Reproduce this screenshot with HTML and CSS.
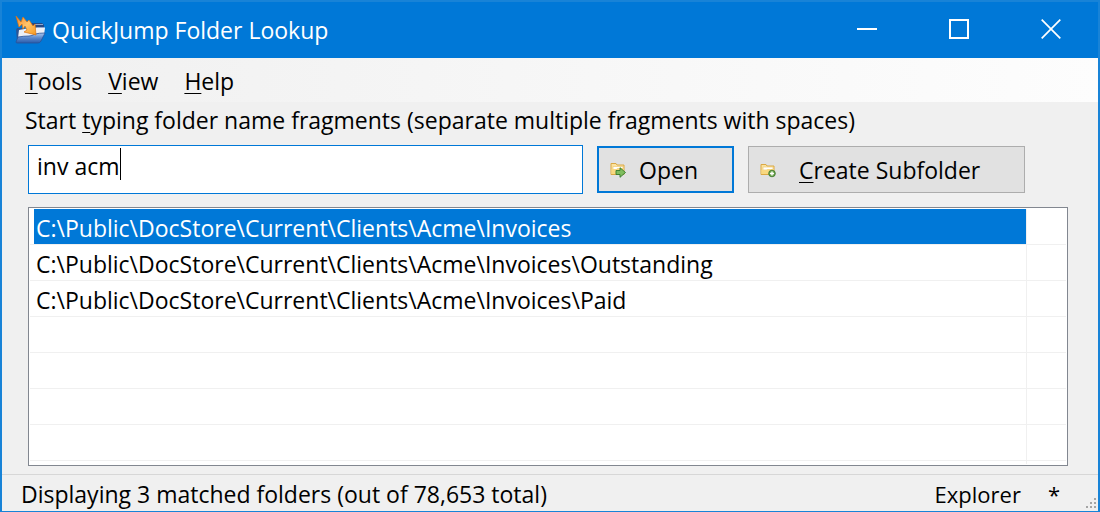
FILE: index.html
```
<!DOCTYPE html>
<html lang="en">
<head>
    <meta charset="UTF-8">
    <meta name="viewport" content="width=device-width, initial-scale=1.0">
    <title>QuickJump Folder Lookup</title>
    <link rel="stylesheet" href="styles.css">
</head>
<body>
    <div class="window">
        <header class="titlebar">
            <svg class="app-icon" width="32" height="30" viewBox="0 0 32 30" aria-hidden="true">
                <defs>
                    <linearGradient id="folderBlue" x1="0" y1="0" x2="0" y2="1">
                        <stop offset="0" stop-color="#a9c8ef"/>
                        <stop offset="0.5" stop-color="#5a87cb"/>
                        <stop offset="1" stop-color="#2a5cab"/>
                    </linearGradient>
                    <linearGradient id="boltOrange" x1="0" y1="0" x2="1" y2="1">
                        <stop offset="0" stop-color="#f58220"/>
                        <stop offset="0.5" stop-color="#ffc56c"/>
                        <stop offset="1" stop-color="#f79a1e"/>
                    </linearGradient>
                </defs>
                <path d="M1 15l1-2h7v9l-7 3z" fill="#2b5595"/>
                <path d="M16 8h11l2 2v3h-13z" fill="#234987"/>
                <path d="M4 15l11-2 14-1 1 1-1 7-4 3H3z" fill="#edf0f6"/>
                <path d="M20 9.500h8M22 12.500h7" stroke="#8ea6cf" fill="none"/>
                <path d="M1 27l2-5q6-1 11-1 3 0 6-2 4-1 10-1l-4 8q-1 2-3 2H2q-1 0-1-1z" fill="url(#folderBlue)" stroke="#2a5298" stroke-width=".8"/>
                <path d="M1 1L6 7L8 2L12 7L14 5L18 11L20 9L21 20L9 17L12 15L10 11L8 14L7 9L4 12Z" fill="url(#boltOrange)" stroke="#e0720f" stroke-width=".7"/>
            </svg>
            <h1 class="title">QuickJump Folder Lookup</h1>
            <div class="window-controls">
                <button type="button" class="control" aria-label="Minimize">
                    <svg width="20" height="20" viewBox="0 0 20 20"><path d="M0 10h20" stroke="#fff" stroke-width="2"/></svg>
                </button>
                <button type="button" class="control" aria-label="Maximize">
                    <svg width="20" height="20" viewBox="0 0 20 20"><path d="M1 1h18v18H1z" stroke="#fff" stroke-width="2" fill="none"/></svg>
                </button>
                <button type="button" class="control" aria-label="Close">
                    <svg width="20" height="20" viewBox="0 0 20 20"><path d="M.7.7l18.6 18.6M19.3.7L.7 19.3" stroke="#fff" stroke-width="1.7"/></svg>
                </button>
            </div>
        </header>

        <nav class="menubar">
            <button type="button" class="menu-item"><u>T</u>ools</button>
            <button type="button" class="menu-item"><u>V</u>iew</button>
            <button type="button" class="menu-item"><u>H</u>elp</button>
        </nav>

        <main class="content">
            <label class="hint" for="fragments">Start <u>t</u>yping folder name fragments (separate multiple fragments with spaces)</label>

            <div class="search-row">
                <div class="search-box">
                    <input type="text" id="fragments" class="search-input" value="inv acm" autocomplete="off" spellcheck="false">
                    <span class="caret"></span>
                </div>
                <button type="submit" class="btn btn-open">
                    <svg width="16" height="16" viewBox="0 0 16 16" aria-hidden="true">
                        <path d="M1 12.500V1.500h5l1 1.500h7v9.500z" fill="#fbe3a0" stroke="#dba843"/>
                        <path d="M3 4.500h10v3H3z" fill="#fff" stroke="#ecc876" stroke-width=".7"/>
                        <path d="M1.500 7h5l1-1h6v6h-12z" fill="#f8d880"/>
                        <path d="M6 8.500h4V5.700l5.500 4.800-5.500 4.800v-2.800H6z" fill="#7fbd5f" stroke="#347b2c" stroke-width=".9"/>
                    </svg>
                    <span>Open</span>
                </button>
                <button type="button" class="btn btn-create">
                    <svg width="16" height="16" viewBox="0 0 16 16" aria-hidden="true">
                        <path d="M1 12.500V2.500h5l1 1.500h7v8.500z" fill="#fbe3a0" stroke="#dba843"/>
                        <path d="M3 5h10v3H3z" fill="#fff" stroke="#ecc876" stroke-width=".7"/>
                        <path d="M1.500 8h5l1-1h6v5h-12z" fill="#f8d880"/>
                        <circle cx="12" cy="11.500" r="3.300" fill="#6fa64f" stroke="#3f7c31" stroke-width=".9"/>
                        <path d="M12 9.500v4M10 11.500h4" stroke="#fff" stroke-width="1.400"/>
                    </svg>
                    <span><u>C</u>reate Subfolder</span>
                </button>
            </div>

            <div class="results">
                <table class="folders" aria-label="Matched folders">
                    <tbody>
                        <tr class="selected"><td><span>C:\Public\DocStore\Current\Clients\Acme\Invoices</span></td><td class="spare"></td></tr>
                        <tr><td><span>C:\Public\DocStore\Current\Clients\Acme\Invoices\Outstanding</span></td><td class="spare"></td></tr>
                        <tr><td><span>C:\Public\DocStore\Current\Clients\Acme\Invoices\Paid</span></td><td class="spare"></td></tr>
                        <tr><td></td><td class="spare"></td></tr>
                        <tr><td></td><td class="spare"></td></tr>
                        <tr><td></td><td class="spare"></td></tr>
                        <tr><td></td><td class="spare"></td></tr>
                        <tr class="last"><td></td><td class="spare"></td></tr>
                    </tbody>
                </table>
            </div>
        </main>

        <footer class="statusbar">
            <span class="status-text">Displaying 3 matched folders (out of 78,653 total)</span>
            <span class="mode">Explorer</span>
            <span class="modified">*</span>
            <svg class="grip" width="12" height="12" viewBox="0 0 12 12" aria-hidden="true">
                <path d="M9 1h2v2H9zM5 5h2v2H5zM9 5h2v2H9zM1 9h2v2H1zM5 9h2v2H5zM9 9h2v2H9z" fill="#a5a5a5"/>
            </svg>
        </footer>
    </div>
</body>
</html>
```

FILE: styles.css
```
* {
    box-sizing: border-box;
}
body {
    margin: 0;
    font-family: "Open Sans", "Noto Sans", sans-serif;
    font-size: 23px;
    line-height: 32px;
    color: #000;
}
button, input {
    font: inherit;
    color: inherit;
}
u {
    text-decoration-thickness: 1px;
    text-underline-offset: 3px;
}
.window {
    display: flex;
    flex-direction: column;
    min-height: 100vh;
    border: 2px solid #1883d7;
    border-bottom-width: 1px;
    background-color: #f0f0f0;
}

/* title bar */
.titlebar {
    display: flex;
    align-items: center;
    height: 56px;
    padding-left: 13px;
    background-color: #0078d7;
    color: #fff;
}
.title {
    flex: 1;
    margin: 0 0 0 5px;
    font-size: 23px;
    font-weight: normal;
}
.window-controls {
    display: flex;
    padding-right: 1px;
}
.control {
    display: flex;
    align-items: center;
    justify-content: center;
    width: 92px;
    height: 56px;
    padding: 0 0 2px;
    border: none;
    background: none;
}

/* menu */
.menubar {
    display: flex;
    gap: 26px;
    height: 44px;
    padding: 0 23px;
    background: linear-gradient(to right, #f0f0f0, #fdfdfd);
}
.menu-item {
    padding: 2px 0 0;
    border: none;
    background: none;
}

.content {
    display: flex;
    flex: 1;
    flex-direction: column;
    padding: 2px 30px 8px 26px;
}
.hint {
    align-self: flex-start;
    margin-left: -3px;
}
.search-row {
    display: flex;
    align-items: flex-start;
    gap: 14px;
    margin: 9px 43px 13px 0;
}
.search-box {
    position: relative;
    flex: 1;
}
.search-input {
    display: block;
    width: 100%;
    height: 49px;
    padding: 0 8px 8px;
    border: 1px solid #0078d7;
    background-color: #fff;
    outline: none;
}
.caret {
    position: absolute;
    top: 3px;
    left: 92px;
    width: 1px;
    height: 32px;
    background-color: #000;
}
.btn {
    display: flex;
    align-items: center;
    height: 47px;
    margin-top: 1px;
    padding: 0 11px;
    border: 1px solid #adadad;
    background-color: #e1e1e1;
}
.btn-open {
    gap: 13px;
    min-width: 137px;
    border: 2px solid #0078d7;
}
.btn-create {
    gap: 23px;
    min-width: 277px;
}

/* results */
.results {
    flex: 1;
    padding: 1px 1px 0;
    border: 1px solid #828790;
    background-color: #fff;
}
.folders {
    width: 100%;
    border-collapse: separate;
    border-spacing: 0;
    table-layout: fixed;
}
.folders td {
    height: 36px;
    padding: 0 0 0 4px;
    border-right: 1px solid #f0f0f0;
    border-bottom: 1px solid #f0f0f0;
}
.folders .spare {
    width: 39px;
    border-right: none;
}
.folders span {
    display: block;
    height: 35px;
    padding: 3px 2px 0;
    overflow: hidden;
    white-space: nowrap;
}
.selected span {
    background-color: #0078d7;
    color: #fff;
}
.folders .last td {
    height: 3px;
    border-bottom: none;
}

/* status bar */
.statusbar {
    display: flex;
    align-items: center;
    height: 37px;
    padding: 2px 0 0 19px;
    border-top: 1px solid #d7d7d7;
}
.status-text {
    flex: 1;
}
.mode, .modified {
    font-size: 22px;
}
.modified {
    margin: 0 25px 0 27px;
}
.grip {
    align-self: flex-end;
    margin: 0 1px 2px 0;
}
```
